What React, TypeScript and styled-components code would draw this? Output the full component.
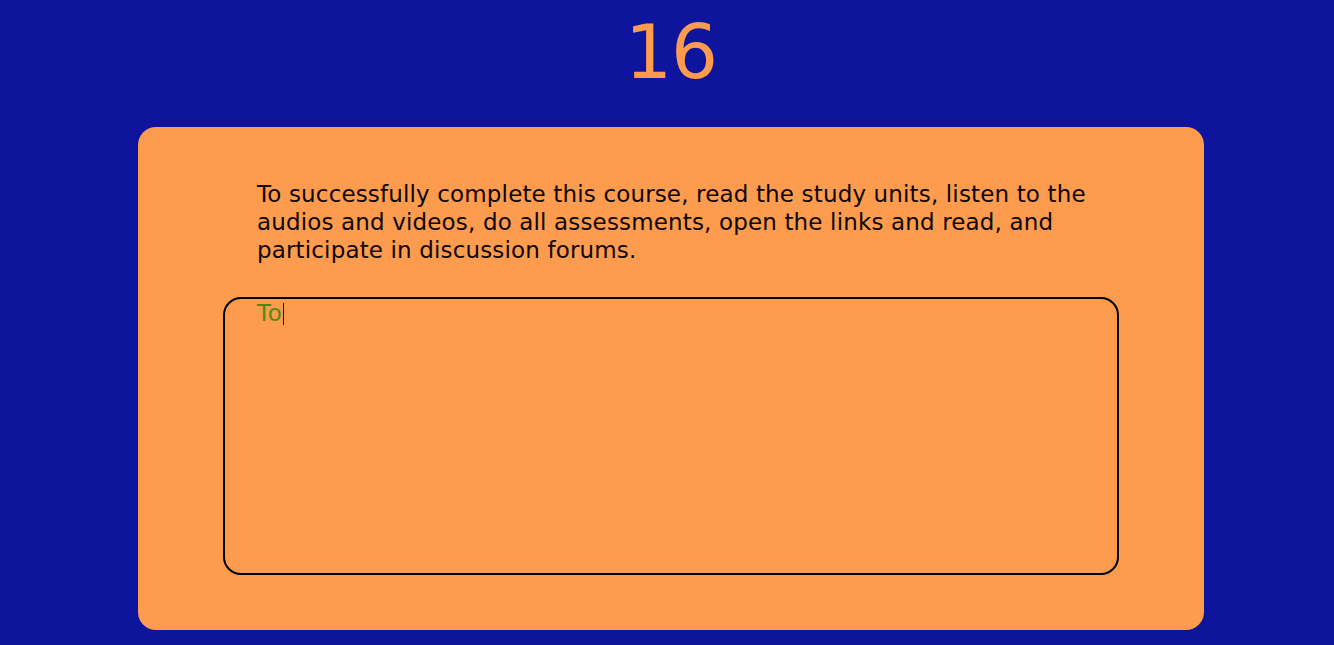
import React from 'react';
import styled, { createGlobalStyle } from 'styled-components';

const GlobalStyle = createGlobalStyle`
  html, body {
    margin: 0;
    padding: 0;
    background: #0f149c;
  }
  body {
    font-family: "DejaVu Sans", sans-serif;
  }
`;

const Page = styled.main`
  display: flex;
  flex-direction: column;
  align-items: center;
  padding: 14px 0 0 8px;
  min-height: 645px;
  box-sizing: border-box;
`;

const DayNumber = styled.h1`
  margin: 0 0 37px;
  font-family: "DejaVu Sans", sans-serif;
  font-weight: 400;
  font-size: 74px;
  line-height: 76px;
  letter-spacing: -1px;
  color: #fd9b4f;
`;

const Card = styled.section`
  width: 1066px;
  box-sizing: border-box;
  background: #fd9b4f;
  border-radius: 18px;
  padding: 53px 85px 55px 85px;
  display: flex;
  flex-direction: column;
  gap: 33px;
`;

const Instructions = styled.p`
  margin: 0;
  padding: 0 20px 0 34px;
  font-size: 23px;
  line-height: 28px;
  letter-spacing: 0.15px;
  color: #0d0600;
`;

const Answer = styled.div`
  width: 896px;
  height: 278px;
  box-sizing: border-box;
  padding: 0 32px;
  border: 2px solid #000;
  border-radius: 18px;
  outline: none;
  font-size: 23px;
  line-height: 28px;
  letter-spacing: 0.6px;
  color: #4f8a14;
  white-space: pre-wrap;
`;

const Caret = styled.span`
  display: inline-block;
  width: 1px;
  height: 22px;
  margin-left: 1px;
  vertical-align: -4px;
  background: #1a1a1a;
`;

export default function App() {
  return (
    <>
      <GlobalStyle />
      <Page>
        <DayNumber>16</DayNumber>
        <Card>
          <Instructions>
            To successfully complete this course, read the study units, listen to the audios and
            videos, do all assessments, open the links and read, and participate in discussion forums.
          </Instructions>
          <Answer role="textbox" contentEditable suppressContentEditableWarning>
            To<Caret />
          </Answer>
        </Card>
      </Page>
    </>
  );
}
